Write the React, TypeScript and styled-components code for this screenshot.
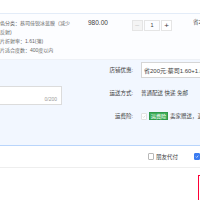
import React from "react";
import styled, { createGlobalStyle } from "styled-components";

const Global = createGlobalStyle`
  html, body { margin: 0; padding: 0; background: #ffffff; }
  body { font-family: "Liberation Sans", "Noto Sans CJK SC", sans-serif; }
`;

const Page = styled.div`
  width: 200px;
  height: 200px;
  overflow: hidden;
  background: #ffffff;
  color: #3c3c3c;
`;

const TopSpace = styled.div`
  height: 13px;
`;

const ItemRow = styled.div`
  display: flex;
  align-items: flex-start;
  height: 45px;
  border-top: 1px solid #e3ecf8;
  background: #fcfdff;
`;

const SkuInfo = styled.div`
  flex-shrink: 0;
  margin-left: -5px;
  width: 76px;
  padding-top: 5px;
  font-size: 5px;
  line-height: 9px;
  color: #666666;
`;

const Price = styled.div`
  flex-shrink: 0;
  margin-left: 17px;
  width: 44px;
  padding-top: 4px;
  font-size: 6.5px;
  line-height: 9px;
  color: #3c3c3c;
`;

const Stepper = styled.div`
  flex-shrink: 0;
  display: flex;
  margin-top: 6px;
  width: 40px;
  height: 11px;
`;

const StepBtn = styled.div<{ $disabled?: boolean }>`
  width: 11px;
  height: 11px;
  box-sizing: border-box;
  border: 1px solid #e5e5e5;
  background: ${(p) => (p.$disabled ? "#f4f4f4" : "#ffffff")};
  color: ${(p) => (p.$disabled ? "#cfcfcf" : "#3c3c3c")};
  font-size: 8px;
  line-height: 9px;
  text-align: center;
`;

const StepInput = styled.div`
  width: 17px;
  height: 11px;
  box-sizing: border-box;
  border: 1px solid #e5e5e5;
  margin: 0 1px;
  font-size: 5.5px;
  line-height: 9px;
  text-align: center;
  color: #3c3c3c;
`;

const Save = styled.div`
  flex-shrink: 0;
  margin-left: 21px;
  padding-top: 4px;
  font-size: 5.5px;
  line-height: 9px;
  white-space: nowrap;
  color: #555;
`;

const Extra = styled.div`
  display: flex;
  align-items: flex-start;
  height: 85px;
  background: #f2f7ff;
  border-top: 1px solid #eef1f6;
  border-bottom: 1px solid #b9d5fb;
`;

const MsgCol = styled.div`
  flex-shrink: 0;
  margin-left: -40px;
  width: 102px;
  padding-top: 26px;
`;

const MsgBox = styled.div`
  position: relative;
  height: 19px;
  box-sizing: border-box;
  background: #ffffff;
  border: 1px solid #dcdcdc;
`;

const Counter = styled.span`
  position: absolute;
  right: 4px;
  bottom: 1px;
  font-size: 5px;
  line-height: 7px;
  color: #999;
`;

const Options = styled.div`
  flex-shrink: 0;
  margin-left: 41px;
  padding-top: 2px;
  display: grid;
  grid-template-columns: 30px 140px;
  column-gap: 8px;
  row-gap: 7px;
  align-items: center;
  font-size: 5.5px;
`;

const Label = styled.div`
  text-align: right;
  color: #3c3c3c;
  white-space: nowrap;
`;

const Value = styled.div<{ $h?: number }>`
  display: flex;
  align-items: center;
  height: ${(p) => p.$h ?? 16}px;
  white-space: nowrap;
  color: #3c3c3c;
`;

const Select = styled.div`
  height: 16px;
  width: 140px;
  box-sizing: border-box;
  border: 1px solid #d6d6d6;
  background: #ffffff;
  padding-left: 2px;
  display: flex;
  align-items: center;
  white-space: nowrap;
  overflow: hidden;
  font-size: 6px;
`;

const Check = styled.span<{ $on?: boolean; $dim?: boolean }>`
  flex-shrink: 0;
  width: 6px;
  height: 7px;
  box-sizing: border-box;
  border: 1px solid ${(p) => (p.$on ? "#3b7cf1" : p.$dim ? "#e2e2e2" : "#b8b8b8")};
  border-radius: 1px;
  background: ${(p) => (p.$on ? "#3b7cf1" : "#ffffff")};
  display: inline-flex;
  align-items: center;
  justify-content: center;
`;

const Badge = styled.span`
  margin-left: 2px;
  padding: 0 1px;
  height: 8px;
  line-height: 7px;
  background: #3fae5a;
  color: #ffffff;
  font-size: 5px;
  border: 1px solid #2f9a4b;
  box-sizing: border-box;
`;

const Note = styled.span`
  margin-left: 2px;
  color: #3c3c3c;
`;

const PayRow = styled.div`
  display: flex;
  align-items: center;
  height: 21px;
  padding-left: 148px;
  border-bottom: 1px solid #eeeeee;
  font-size: 5.5px;
  white-space: nowrap;
`;

const PayText = styled.span`
  margin-left: 2px;
  color: #3c3c3c;
  width: 39px;
`;

const TotalWrap = styled.div`
  padding-top: 7px;
  padding-left: 198px;
`;

const TotalBox = styled.div`
  width: 80px;
  height: 40px;
  border: 1px solid #ff0036;
  border-right: none;
`;

const Tick = ({ color }: { color: string }) => (
  <svg width="5" height="5" viewBox="0 0 10 10">
    <path d="M2 5.2 L4.2 7.4 L8.2 2.8" fill="none" stroke={color} strokeWidth="1.6" />
  </svg>
);

export default function App() {
  return (
    <Page>
      <Global />
      <TopSpace />
      <ItemRow>
        <SkuInfo>
          <div>颜色分类：蔡司佳锐冰蓝膜（减少光反射)</div>
          <div>镜片折射率：1.61(薄)</div>
          <div>镜片适合度数：400度以内</div>
        </SkuInfo>
        <Price>980.00</Price>
        <Stepper>
          <StepBtn $disabled>−</StepBtn>
          <StepInput>1</StepInput>
          <StepBtn>+</StepBtn>
        </Stepper>
        <Save>省200.00</Save>
      </ItemRow>
      <Extra>
        <MsgCol>
          <MsgBox>
            <Counter>0/200</Counter>
          </MsgBox>
        </MsgCol>
        <Options>
          <Label>店铺优惠:</Label>
          <Select>省200元:蔡司1.60+1.60镜片套餐</Select>
          <Label>运送方式:</Label>
          <Value>普通配送 快递 免邮</Value>
          <Label>运费险:</Label>
          <Value>
            <Check $dim>
              <Tick color="#d0d0d0" />
            </Check>
            <Badge>运费险</Badge>
            <Note>卖家赠送，退换货可赔付</Note>
          </Value>
        </Options>
      </Extra>
      <PayRow>
        <Check />
        <PayText>朋友代付</PayText>
        <Check $on>
          <Tick color="#ffffff" />
        </Check>
      </PayRow>
      <TotalWrap>
        <TotalBox />
      </TotalWrap>
    </Page>
  );
}
